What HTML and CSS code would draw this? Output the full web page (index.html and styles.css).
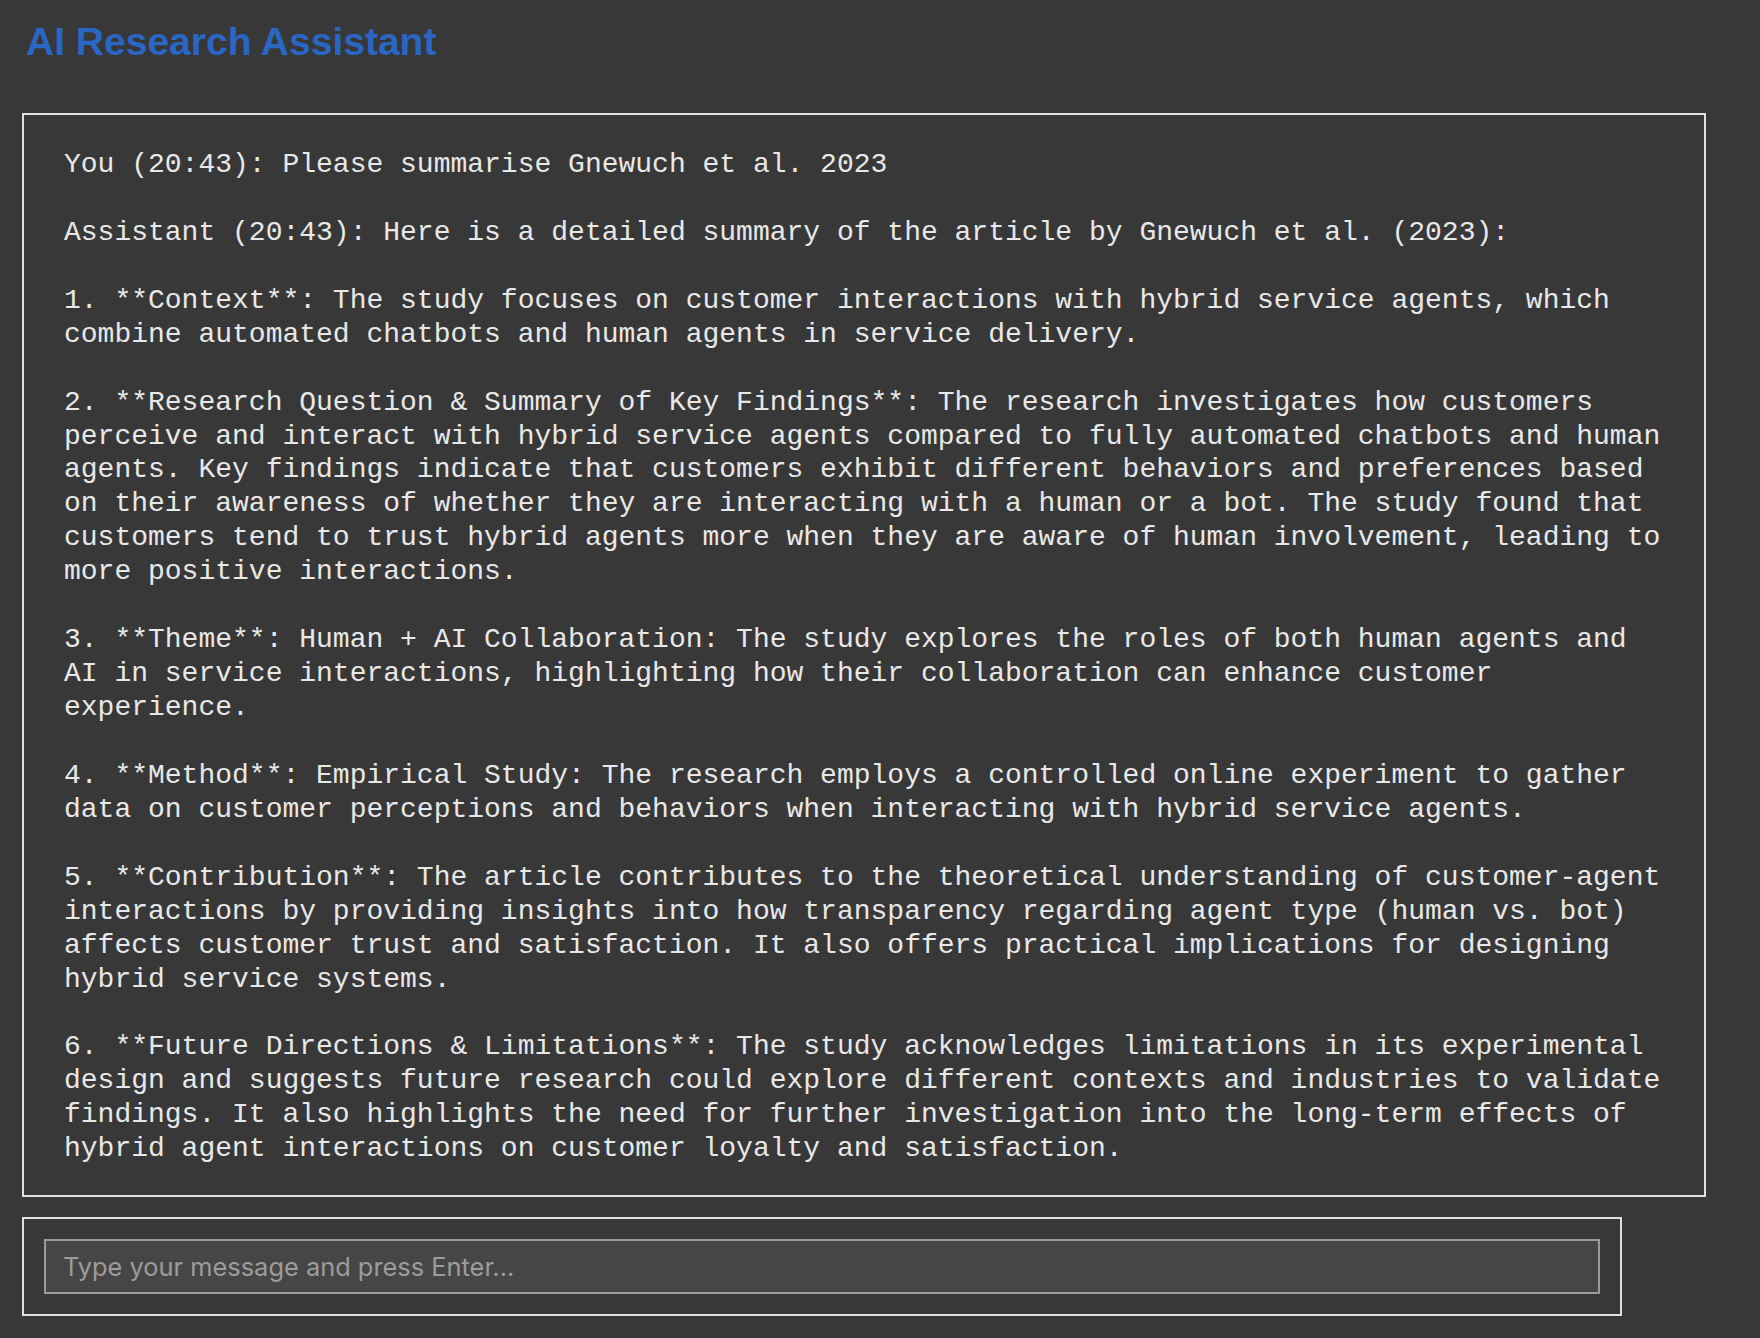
FILE: index.html
```html
<!DOCTYPE html>
<html lang="en">
<head>
<meta charset="utf-8">
<title>AI Research Assistant</title>
<link rel="stylesheet" href="styles.css">
</head>
<body>
<div class="app">
<h1 class="title">AI Research Assistant</h1>
<div class="chat">You (20:43): Please summarise Gnewuch et al. 2023

Assistant (20:43): Here is a detailed summary of the article by Gnewuch et al. (2023):

1. **Context**: The study focuses on customer interactions with hybrid service agents, which combine automated chatbots and human agents in service delivery.

2. **Research Question &amp; Summary of Key Findings**: The research investigates how customers perceive and interact with hybrid service agents compared to fully automated chatbots and human agents. Key findings indicate that customers exhibit different behaviors and preferences based on their awareness of whether they are interacting with a human or a bot. The study found that customers tend to trust hybrid agents more when they are aware of human involvement, leading to more positive interactions.

3. **Theme**: Human + AI Collaboration: The study explores the roles of both human agents and AI in service interactions, highlighting how their collaboration can enhance customer experience.

4. **Method**: Empirical Study: The research employs a controlled online experiment to gather data on customer perceptions and behaviors when interacting with hybrid service agents.

5. **Contribution**: The article contributes to the theoretical understanding of customer-agent interactions by providing insights into how transparency regarding agent type (human vs. bot) affects customer trust and satisfaction. It also offers practical implications for designing hybrid service systems.

6. **Future Directions &amp; Limitations**: The study acknowledges limitations in its experimental design and suggests future research could explore different contexts and industries to validate findings. It also highlights the need for further investigation into the long-term effects of hybrid agent interactions on customer loyalty and satisfaction.</div>
<div class="composer">
<input class="message-input" type="text" placeholder="Type your message and press Enter...">
</div>
</div>
</body>
</html>
```

FILE: styles.css
```css
html, body {
  margin: 0;
  background: #383838;
}

.app {
  padding: 20px 22px 0 22px;
  display: flex;
  flex-direction: column;
  align-items: flex-start;
}

.title {
  margin: 0 0 49px 4px;
  font-family: "Liberation Sans", Arial, Helvetica, sans-serif;
  font-weight: bold;
  font-size: 39px;
  line-height: 44px;
  color: #2a66c4;
}

.chat {
  width: 1600px;
  padding: 33px 40px 29px 40px;
  border: 2px solid #e0e0e0;
  white-space: pre-wrap;
  font-family: "Liberation Mono", "Courier New", monospace;
  font-size: 28px;
  line-height: 33.94px;
  color: #e8e8e8;
}

.composer {
  margin-top: 20px;
  width: 1556px;
  padding: 20px;
  border: 2px solid #e0e0e0;
}

.message-input {
  display: block;
  width: 100%;
  height: 55px;
  box-sizing: border-box;
  margin: 0;
  padding: 0 17px;
  border: 2px solid #9a9a9a;
  border-radius: 0;
  background: #464646;
  font-family: Inter, "Noto Sans", sans-serif;
  font-size: 25.4px;
  color: #e0e0e0;
  outline: none;
}

.message-input::placeholder {
  color: #9c9c9c;
}
```
